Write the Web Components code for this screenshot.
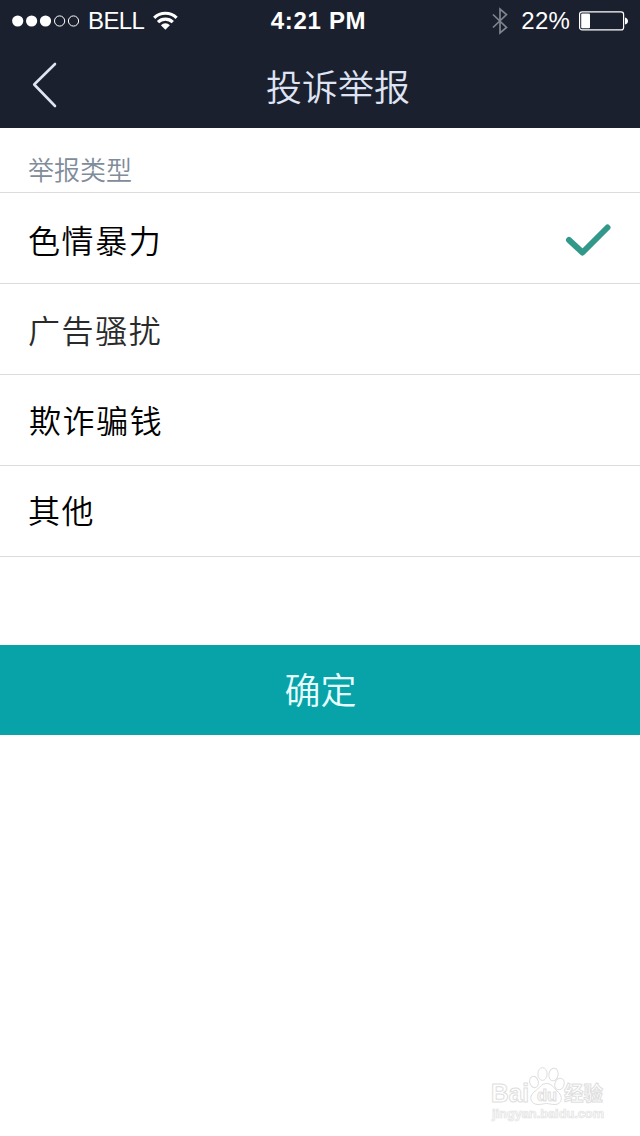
<!DOCTYPE html>
<html lang="zh-CN">
<head>
<meta charset="UTF-8">
<title>投诉举报</title>
<style>
  body {
    margin: 0;
    background: #fff;
    font-family: "Noto Sans CJK SC", sans-serif;
    font-weight: 350;
  }
</style>
</head>
<body>
<report-page></report-page>

<script>
class StatusBar extends HTMLElement {
  constructor() {
    super();
    this.attachShadow({ mode: 'open' });

    this.shadowRoot.innerHTML = `
      <style>
        :host {
          display: grid;
          grid-template-columns: 1fr auto 1fr;
          align-items: center;
          height: 40px;
          padding: 0 11px 0 12px;
          color: #fff;
          font: 400 24px/40px "Liberation Sans", Arial, sans-serif;
        }

        svg {
          display: block;
        }

        .left, .right {
          display: flex;
          align-items: center;
        }

        .right {
          justify-content: flex-end;
        }

        .carrier {
          margin: 0 8px 0 8px;
          font-size: 24px;
          letter-spacing: -0.6px;
        }

        .time {
          margin: 0 4px 0 0;
          font-weight: bold;
          font-size: 24px;
          letter-spacing: 0.7px;
        }

        .percent {
          margin: 1px 9px 0 13px;
          letter-spacing: 0.2px;
        }
      </style>

      <div class="left">
        <svg width="68" height="12" viewBox="0 0 68 12">
          <g fill="#fff">
            <circle cx="5.7" cy="6" r="5.6"/>
            <circle cx="19.6" cy="6" r="5.6"/>
            <circle cx="33.5" cy="6" r="5.6"/>
          </g>
          <g fill="none" stroke="#fff">
            <circle cx="47.6" cy="6" r="5.1"/>
            <circle cx="61.5" cy="6" r="5.1"/>
          </g>
        </svg>
        <span class="carrier">BELL</span>
        <svg width="26" height="20" viewBox="0 0 26 20">
          <g fill="none" stroke="#fff" stroke-width="3.2">
            <path d="M2.2 6.8 A16 16 0 0 1 24.6 6.8"/>
            <path d="M6 11.2 A10.6 10.6 0 0 1 20.8 11.2"/>
          </g>
          <path d="M8.9 14.2 A6.4 6.4 0 0 1 17.9 14.2 L13.4 18.8Z" fill="#fff"/>
        </svg>
      </div>
      <span class="time">4:21 PM</span>
      <div class="right">
        <svg width="16" height="28" viewBox="0 0 16 28">
          <path d="M1 7.5 L14.5 20.5 L8 26 V2 L14.5 7.5 L1 20.5" fill="none" stroke="#7f858f" stroke-width="1.7"/>
        </svg>
        <span class="percent">22%</span>
        <svg width="50" height="20" viewBox="0 0 50 20">
          <rect x="0.6" y="0.9" width="44" height="18" rx="2.5" fill="none" stroke="#fff" stroke-width="1.2"/>
          <rect x="2.2" y="2.5" width="8.8" height="14.8" rx="1" fill="#fff"/>
          <path d="M46 6.4 Q49 7.4 49 10 Q49 12.6 46 13.6Z" fill="#fff"/>
        </svg>
      </div>
    `;
  }
}

class NavBar extends HTMLElement {
  constructor() {
    super();
    this.attachShadow({ mode: 'open' });

    this.shadowRoot.innerHTML = `
      <style>
        :host {
          display: grid;
          grid-template-columns: 60px 1fr 60px;
          align-items: center;
          height: 88px;
          color: #dfe4f4;
        }

        svg {
          display: block;
          margin: 2px 0 0 32px;
        }

        h1 {
          margin: 0;
          padding: 3px 0 0 36px;
          font-size: 36px;
          font-weight: inherit;
          line-height: 85px;
          text-align: center;
        }
      </style>

      <svg width="25" height="46" viewBox="0 0 25 46">
        <path d="M23 2 L2.2 22.5 L23 44" fill="none" stroke="#dfe4f4" stroke-width="2.6" stroke-linecap="round" stroke-linejoin="round"/>
      </svg>
      <h1><slot></slot></h1>
    `;
  }
}

class ReportOption extends HTMLElement {
  constructor() {
    super();
    this.attachShadow({ mode: 'open' });

    this.shadowRoot.innerHTML = `
      <style>
        :host {
          display: flex;
          justify-content: space-between;
          align-items: center;
          box-sizing: border-box;
          height: 91px;
          padding: 0 28px;
          border-bottom: 1px solid #dcdcdc;
          color: #000;
          font-size: 32px;
          line-height: 48px;
          letter-spacing: 1.6px;
        }

        .label {
          margin-bottom: var(--lift, 0px);
        }

        svg {
          display: none;
          margin-top: 3px;
        }

        /* la marca solo aparece en la opción elegida */
        :host([checked]) svg {
          display: block;
        }
      </style>

      <span class="label"><slot></slot></span>
      <svg width="47" height="34" viewBox="0 0 47 34">
        <path d="M4 17 L17.5 29.5 L42.5 4.5" fill="none" stroke="#32988a" stroke-width="6" stroke-linecap="round" stroke-linejoin="round"/>
      </svg>
    `;
  }
}

class ConfirmButton extends HTMLElement {
  constructor() {
    super();
    this.attachShadow({ mode: 'open' });

    this.shadowRoot.innerHTML = `
      <style>
        :host {
          display: block;
        }

        button {
          display: block;
          width: 100%;
          height: 90px;
          padding: 0 0 4px 1px;
          border: 0;
          background: #07a3a8;
          color: #e6ffff;
          font: inherit;
          font-size: 36px;
        }
      </style>

      <button type="button"><slot></slot></button>
    `;
  }
}

class SiteMark extends HTMLElement {
  constructor() {
    super();
    this.attachShadow({ mode: 'open' });

    this.shadowRoot.innerHTML = `
      <style>
        :host {
          display: block;
          width: 118px;
          height: 58px;
        }

        svg {
          display: block;
        }

        text {
          font-family: "Liberation Sans", "Noto Sans CJK SC", sans-serif;
          font-weight: bold;
        }
      </style>

      <svg width="118" height="58" viewBox="0 0 118 58" fill="#fff" stroke="#dedede" stroke-width="1">
        <text x="1" y="37" font-size="25" textLength="38" lengthAdjust="spacingAndGlyphs">Bai</text>
        <ellipse cx="44" cy="17" rx="4.3" ry="5.8" transform="rotate(-15 44 17)"/>
        <ellipse cx="52.5" cy="9" rx="4.6" ry="6.4"/>
        <ellipse cx="63.5" cy="9.5" rx="4.6" ry="6.4" transform="rotate(10 63.5 9.5)"/>
        <ellipse cx="69.5" cy="19" rx="4.6" ry="6" transform="rotate(20 69.5 19)"/>
        <path d="M56.5 18.5 C62 18.5 63.5 23 67 26 C74 31 72 39.5 65 39.5 C61 39.5 59 38.5 56.5 38.5 C54 38.5 52 39.5 48 39.5 C41 39.5 38 32 44 27 C50 23 51 18.5 56.5 18.5Z"/>
        <text x="47" y="36" font-size="16" textLength="20" lengthAdjust="spacingAndGlyphs">du</text>
        <text x="74" y="36" font-size="20" textLength="39" lengthAdjust="spacingAndGlyphs">经验</text>
        <text x="2" y="53" font-size="12" fill="#fafafa" stroke="#e4e4e4" stroke-width="0.7" textLength="112" lengthAdjust="spacingAndGlyphs">jingyan.baidu.com</text>
      </svg>
    `;
  }
}

class ReportPage extends HTMLElement {
  constructor() {
    super();
    this.attachShadow({ mode: 'open' });

    this.shadowRoot.innerHTML = `
      <style>
        :host {
          display: flex;
          flex-direction: column;
          height: 1136px;
        }

        header {
          background: #1b202e;
        }

        h2 {
          box-sizing: border-box;
          height: 65px;
          margin: 0;
          padding: 22px 28px 0;
          border-bottom: 1px solid #dcdcdc;
          color: #7f8c99;
          font-size: 26px;
          font-weight: inherit;
          line-height: 38px;
        }

        report-option:nth-of-type(1) { --lift: -2px; }
        report-option:nth-of-type(2) { --lift: 0px; color: #2a2a2a; }
        report-option:nth-of-type(3) { --lift: 2px; padding-left: 29px; }
        report-option:nth-of-type(4) { --lift: 4px; }

        confirm-button {
          margin-top: 88px;
        }

        site-mark {
          margin: auto 32px 13px auto;
        }
      </style>

      <header>
        <status-bar></status-bar>
        <nav-bar>投诉举报</nav-bar>
      </header>
      <main>
        <h2>举报类型</h2>
        <report-option checked>色情暴力</report-option>
        <report-option>广告骚扰</report-option>
        <report-option>欺诈骗钱</report-option>
        <report-option>其他</report-option>
        <confirm-button>确定</confirm-button>
      </main>
      <site-mark></site-mark>
    `;
  }
}

customElements.define('status-bar', StatusBar);
customElements.define('nav-bar', NavBar);
customElements.define('report-option', ReportOption);
customElements.define('confirm-button', ConfirmButton);
customElements.define('site-mark', SiteMark);
customElements.define('report-page', ReportPage);
</script>
</body>
</html>
